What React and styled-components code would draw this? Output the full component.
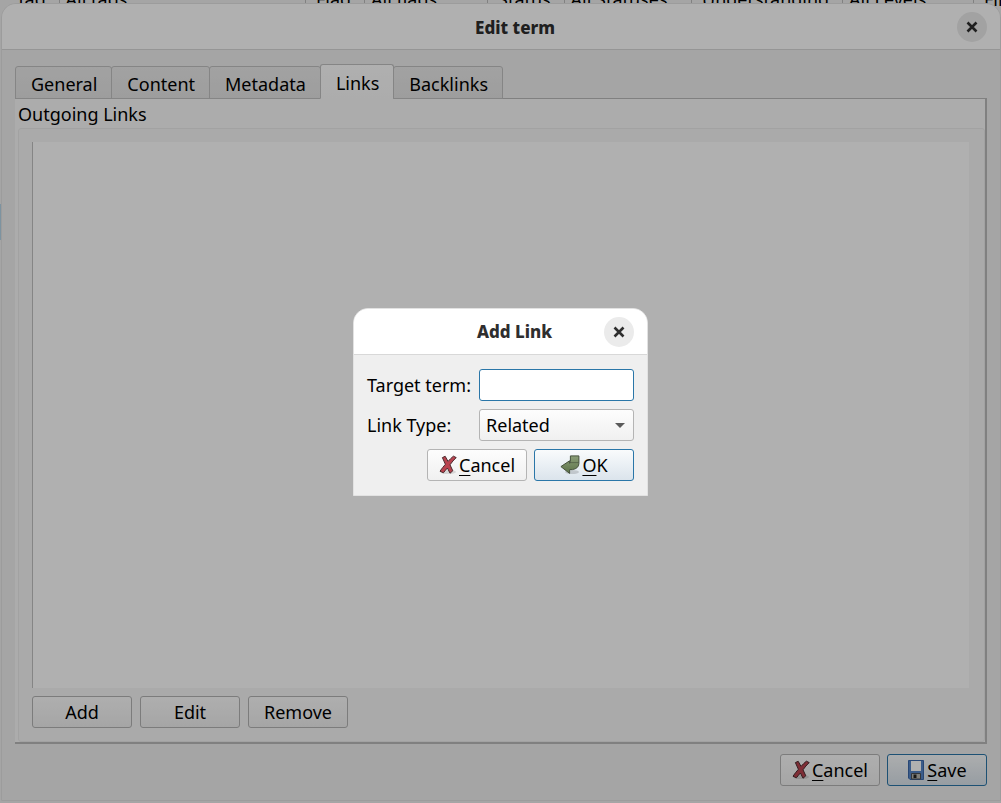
import React from 'react';
import styled, { createGlobalStyle, css } from 'styled-components';

const GlobalStyle = createGlobalStyle`
    * {
        box-sizing: border-box;
    }
    body {
        margin: 0;
        background: #efefef;
        color: #000;
        font: 18px/24px "Noto Sans", sans-serif;
    }
    button, input, select {
        font: inherit;
        color: inherit;
    }
`;

const filters = [
    { label: 'Tag:', value: 'All tags', width: 300 },
    { label: 'Flag:', value: 'All flags', width: 182 },
    { label: 'Status:', value: 'All Statuses', width: 204 },
    { label: 'Understanding:', value: 'All Levels', width: 282 },
    { label: 'Find:', value: '', width: 60 },
];

const tabs = ['General', 'Content', 'Metadata', 'Links', 'Backlinks'];

function CloseIcon() {
    return (
        <svg width="12" height="12" viewBox="0 0 12 12" aria-hidden="true">
            <path d="M1.5 1.5 10.5 10.5M10.5 1.5 1.5 10.5" stroke="#2e2e2e" strokeWidth="2.6" />
        </svg>
    );
}

function CancelIcon() {
    return (
        <svg width="18" height="20" viewBox="0 0 18 20" aria-hidden="true">
            <ellipse cx="9" cy="17" rx="8" ry="2" fill="#000" opacity=".12" />
            <path
                d="M3.4 2.6 6.2 1.3 9 6.4C10.8 4.4 12.4 2.8 14.4 1.2L17.2 2.6C14.8 4.8 12.8 7.2 11 9.8L13.8 15.8 11 18.2 8.4 13C7 14.6 5.6 16.2 4.4 17.8L1 16.2C2.6 13.8 4.4 11.6 6.4 9.3Z"
                fill="#b9434f"
                stroke="#4a2a2d"
                strokeWidth="1"
                strokeLinejoin="round"
            />
        </svg>
    );
}

function OkIcon() {
    return (
        <svg width="20" height="20" viewBox="0 0 20 20" aria-hidden="true">
            <defs>
                <linearGradient id="ok-fill" x1="0" y1="0" x2="0" y2="1">
                    <stop offset="0" stopColor="#8a9e78" />
                    <stop offset="1" stopColor="#5d7348" />
                </linearGradient>
            </defs>
            <ellipse cx="12" cy="17" rx="7" ry="2" fill="#000" opacity=".15" />
            <path
                d="M10.4.9H18.9V8.6Q18.6 13.6 12.4 14.6H9.6V18.4L.9 11.6 9.6 5.8V8.4Q10.8 8.2 10.4 6.6Z"
                fill="url(#ok-fill)"
                stroke="#46523c"
                strokeWidth="1"
                strokeLinejoin="round"
            />
            <path d="M11 7.6H18.6" stroke="#46523c" strokeWidth="1" opacity=".6" />
        </svg>
    );
}

function SaveIcon() {
    return (
        <svg width="18" height="20" viewBox="0 0 18 20" aria-hidden="true">
            <path d="M1.5.5H16.5V19.5H3L1.5 18Z" fill="#5686c8" stroke="#3b68aa" />
            <path d="M4 1H14V11H4Z" fill="#fff" />
            <path d="M4.5 13.5H13.5V19H4.5Z" fill="#b9b9b3" stroke="#4b4f55" />
            <path d="M6.5 14.5H9.5V18H6.5Z" fill="#222" />
        </svg>
    );
}

function TitleBar({ id, title }) {
    return (
        <Header>
            <Title id={id}>{title}</Title>
            <CloseButton type="button" aria-label="Close">
                <CloseIcon />
            </CloseButton>
        </Header>
    );
}

function App() {
    return (
        <Screen>
            <GlobalStyle />
            <FilterBar>
                {filters.map(({ label, value, width }) => (
                    <Filter key={label} $width={width}>
                        <span>{label}</span>
                        <FilterValue>{value}</FilterValue>
                    </Filter>
                ))}
            </FilterBar>
            <Window>
                <TitleBar title="Edit term" />
                <WindowBody>
                    <TabList role="tablist">
                        {tabs.map((tab) => (
                            <Tab
                                key={tab}
                                type="button"
                                role="tab"
                                aria-selected={tab === 'Links'}
                                $active={tab === 'Links'}
                            >
                                {tab}
                            </Tab>
                        ))}
                    </TabList>
                    <Panel role="tabpanel">
                        <GroupTitle>Outgoing Links</GroupTitle>
                        <Group>
                            <LinkList />
                            <Buttons>
                                <Button type="button">Add</Button>
                                <Button type="button">Edit</Button>
                                <Button type="button">Remove</Button>
                            </Buttons>
                        </Group>
                    </Panel>
                    <Footer>
                        <Button type="button">
                            <CancelIcon />
                            <span><Key>C</Key>ancel</span>
                        </Button>
                        <Button type="button" $primary>
                            <SaveIcon />
                            <span><Key>S</Key>ave</span>
                        </Button>
                    </Footer>
                </WindowBody>
            </Window>
            <Overlay>
                <Dialog role="dialog" aria-labelledby="add-link-title">
                    <TitleBar id="add-link-title" title="Add Link" />
                    <Form>
                        <label htmlFor="target">Target term:</label>
                        <TextInput id="target" type="text" />
                        <label htmlFor="type">Link Type:</label>
                        <SelectBox>
                            <Select id="type" defaultValue="Related">
                                <option>Related</option>
                            </Select>
                            <Caret width="10" height="5" viewBox="0 0 10 5" aria-hidden="true">
                                <path d="M0 0H10L5 5Z" fill="#5a5a5a" />
                            </Caret>
                        </SelectBox>
                        <DialogButtons>
                            <Button type="button">
                                <CancelIcon />
                                <span><Key>C</Key>ancel</span>
                            </Button>
                            <Button type="button" $primary>
                                <OkIcon />
                                <span><Key>O</Key>K</span>
                            </Button>
                        </DialogButtons>
                    </Form>
                </Dialog>
            </Overlay>
        </Screen>
    );
}

const Screen = styled.div`
    display: flex;
    flex-direction: column;
    min-height: 100vh;
    padding: 0 0 2px 1px;
    background: linear-gradient(#b5d5e8, #b5d5e8) 0 204px / 1px 36px no-repeat #efefef;
`;
const FilterBar = styled.div`
    display: flex;
    align-items: flex-end;
    height: 7px;
    margin-bottom: -4px;
    padding-left: 15px;
    overflow: hidden;
    white-space: nowrap;
`;
const Filter = styled.div`
    display: flex;
    flex: 0 0 auto;
    gap: 8px;
    width: ${(props) => props.$width}px;
    line-height: 16px;
`;
const FilterValue = styled.span`
    flex: 1;
    margin-right: 10px;
    padding-left: 6px;
    border: solid #bbb;
    border-width: 0 1px;
`;
const Window = styled.main`
    display: flex;
    flex: 1;
    flex-direction: column;
    border: 1px solid #e2e2e2;
    border-radius: 15px 15px 0 0;
    background: #efefef;
    z-index: 0;
`;
const Header = styled.header`
    display: grid;
    grid-template-columns: 1fr 30px;
    align-items: center;
    height: 46px;
    padding: 1px 13px 0 71px;
    border-bottom: 1px solid #d8d8d8;
    border-radius: 14px 14px 0 0;
    background: #fff;
`;
const Title = styled.h1`
    margin: 0;
    padding-top: 1px;
    color: #2e2e2e;
    font-size: 17px;
    font-weight: 800;
    text-align: center;
`;
const CloseButton = styled.button`
    display: grid;
    place-items: center;
    width: 30px;
    height: 30px;
    padding: 0;
    border: 0;
    border-radius: 50%;
    background: #ebebeb;
`;
const WindowBody = styled.div`
    display: flex;
    flex: 1;
    flex-direction: column;
    padding: 14px 13px 14px;
`;
const TabList = styled.div`
    display: flex;
    align-items: flex-end;
    z-index: 1;
    margin-bottom: -1px;
`;
const Tab = styled.button`
    height: 33px;
    margin-right: -1px;
    padding: 2px 14px 0 15px;
    border: 1px solid #c1c1c1;
    border-radius: 3px 3px 0 0;
    background: linear-gradient(#ebebeb, #e4e4e4);
    ${(props) => props.$active && css`
        height: 35px;
        border-bottom-color: #fafafa;
        background: linear-gradient(#fff, #fafafa);
    `}
`;
const Panel = styled.section`
    display: flex;
    flex: 1;
    flex-direction: column;
    padding: 3px 0 0 3px;
    border: solid #bababa;
    border-width: 1px 2px 2px 0;
    background: #fafafa;
`;
const GroupTitle = styled.h2`
    margin: 0 0 2px;
    font-size: 18px;
    font-weight: 400;
`;
const Group = styled.div`
    display: flex;
    flex: 1;
    flex-direction: column;
    gap: 8px;
    padding: 13px 15px 13px 13px;
    border: 1px solid #ebebeb;
    border-radius: 3px;
    background: #f7f7f7;
`;
const LinkList = styled.div`
    flex: 1;
    border-left: 1px solid #c1c1c1;
    background: #fff;
`;
const Buttons = styled.div`
    display: flex;
    gap: 8px;
`;
const Button = styled.button`
    display: flex;
    align-items: center;
    justify-content: center;
    gap: 2px;
    width: 100px;
    height: 32px;
    padding: 0;
    border: 1px solid ${(props) => (props.$primary ? '#2a76a8' : '#b4b4b4')};
    border-radius: 3px;
    background: ${(props) => (props.$primary
        ? 'linear-gradient(#f9fbfc, #dbe4ec)'
        : 'linear-gradient(#fdfdfd, #f0f0f0)')};
    white-space: nowrap;
`;
const Key = styled.span`
    text-decoration: underline;
    text-decoration-thickness: 1px;
    text-underline-offset: 3px;
`;
const Footer = styled.footer`
    display: flex;
    justify-content: flex-end;
    gap: 7px;
    margin-top: 10px;
`;
const Overlay = styled.div`
    position: fixed;
    inset: 0;
    z-index: 2;
    display: grid;
    place-items: center;
    background: rgba(0, 0, 0, 0.31);
`;
const Dialog = styled.div`
    border: 1px solid #e2e2e2;
    border-radius: 15px 15px 0 0;
    background: #efefef;
`;
const Form = styled.form`
    display: grid;
    grid-template-columns: auto 155px;
    align-items: center;
    gap: 8px;
    padding: 14px 13px;
`;
const TextInput = styled.input`
    width: 100%;
    height: 32px;
    padding: 0 6px;
    border: 1px solid #2a76a8;
    border-radius: 3px;
    outline: 0;
    background: #fff;
`;
const SelectBox = styled.div`
    position: relative;
`;
const Select = styled.select`
    display: block;
    width: 100%;
    height: 32px;
    padding: 0 24px 0 6px;
    appearance: none;
    border: 1px solid #b4b4b4;
    border-radius: 3px;
    background: linear-gradient(#fdfdfd, #f0f0f0);
`;
const Caret = styled.svg`
    position: absolute;
    top: 14px;
    right: 9px;
    pointer-events: none;
`;
const DialogButtons = styled.div`
    display: flex;
    grid-column: 1 / -1;
    justify-content: flex-end;
    gap: 7px;
`;

export default App;
